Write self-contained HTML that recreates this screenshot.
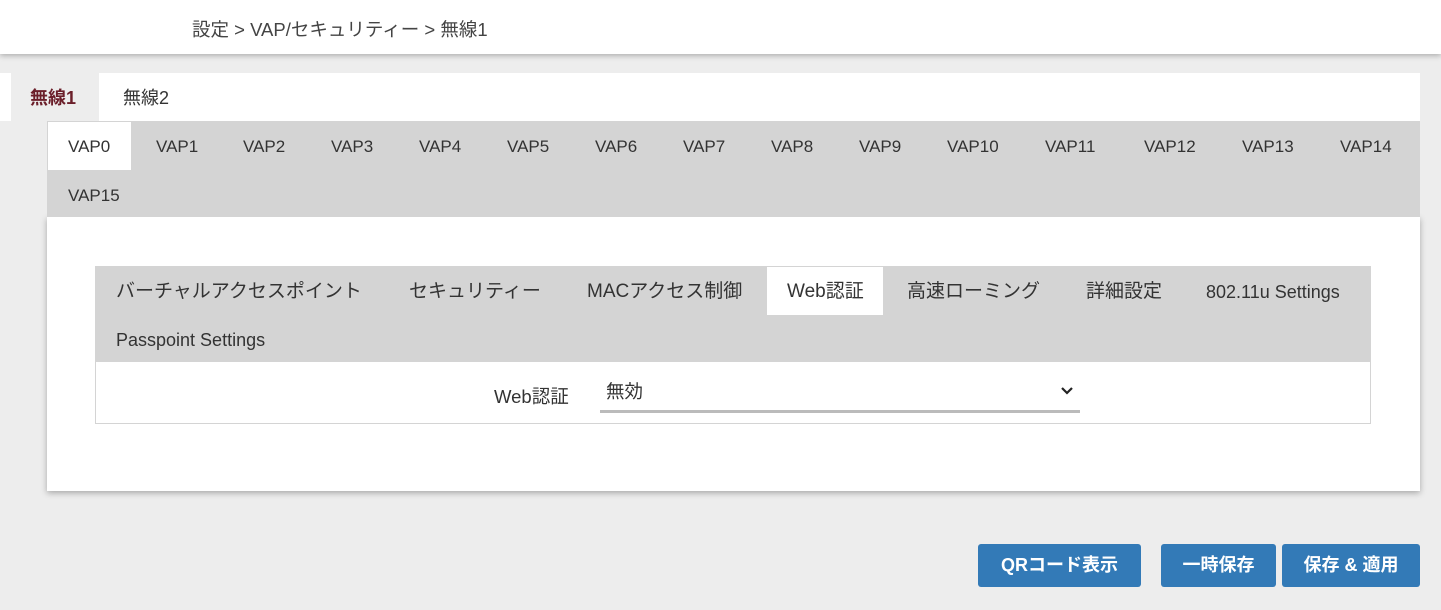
<!DOCTYPE html>
<html><head><meta charset="utf-8"><style>
*{margin:0;padding:0;box-sizing:border-box}
body{width:1441px;height:610px;background:#ededed;font-family:"Liberation Sans","Noto Sans CJK JP",sans-serif;color:#333;position:relative;overflow:hidden}
.a{position:absolute;white-space:nowrap}
#hdr{left:0;top:0;width:1441px;height:54px;background:#fff;box-shadow:0 2px 5px rgba(0,0,0,.25)}
.t{font-size:17px;line-height:50px}
.s{font-size:19px;line-height:50px}
.btn{background:#337ab7;color:#fff;font-weight:bold;font-size:18px;height:43px;line-height:43px;text-align:center;border-radius:3px;top:544px}
</style></head><body>
<div class="a" id="hdr"></div>
<div class="a" style="left:192px;top:16px;font-size:18.5px;color:#444">設定 &gt; VAP/セキュリティー &gt; 無線1</div>
<div class="a" style="left:0;top:73px;width:1420px;height:48px;background:#fff"></div>
<div class="a" style="left:11px;top:73px;width:88px;height:48px;background:#ededed"></div>
<div class="a t" style="left:30px;top:73px;font-weight:bold;color:#6b1f2a;font-size:18px">無線1</div>
<div class="a t" style="left:123px;top:73px;font-size:18px">無線2</div>
<div class="a" style="left:47px;top:217px;width:1373px;height:274px;background:#fff;box-shadow:0 2px 6px rgba(0,0,0,.3)"></div>
<div class="a" style="left:47px;top:121px;width:1373px;height:96px;background:#d4d4d4"></div>
<div class="a" style="left:48px;top:122px;width:83px;height:48px;background:#fff"></div>
<div class="a t" style="left:68px;top:122px">VAP0</div>
<div class="a t" style="left:156px;top:122px">VAP1</div>
<div class="a t" style="left:243px;top:122px">VAP2</div>
<div class="a t" style="left:331px;top:122px">VAP3</div>
<div class="a t" style="left:419px;top:122px">VAP4</div>
<div class="a t" style="left:507px;top:122px">VAP5</div>
<div class="a t" style="left:595px;top:122px">VAP6</div>
<div class="a t" style="left:683px;top:122px">VAP7</div>
<div class="a t" style="left:771px;top:122px">VAP8</div>
<div class="a t" style="left:859px;top:122px">VAP9</div>
<div class="a t" style="left:947px;top:122px">VAP10</div>
<div class="a t" style="left:1045px;top:122px">VAP11</div>
<div class="a t" style="left:1144px;top:122px">VAP12</div>
<div class="a t" style="left:1242px;top:122px">VAP13</div>
<div class="a t" style="left:1340px;top:122px">VAP14</div>
<div class="a t" style="left:68px;top:171px">VAP15</div>
<div class="a" style="left:95px;top:266px;width:1276px;height:96px;background:#d4d4d4"></div>
<div class="a" style="left:767px;top:267px;width:116px;height:48px;background:#fff"></div>
<div class="a s" style="left:116px;top:267px">バーチャルアクセスポイント</div>
<div class="a s" style="left:409px;top:267px">セキュリティー</div>
<div class="a s" style="left:587px;top:267px">MACアクセス制御</div>
<div class="a s" style="left:787px;top:267px">Web認証</div>
<div class="a s" style="left:907px;top:267px">高速ローミング</div>
<div class="a s" style="left:1086px;top:267px">詳細設定</div>
<div class="a s" style="left:1206px;top:267px;font-size:18px">802.11u Settings</div>
<div class="a s" style="left:116px;top:315px;font-size:18px">Passpoint Settings</div>
<div class="a" style="left:95px;top:362px;width:1276px;height:62px;border:1px solid #d4d4d4;border-top:none;background:#fff"></div>
<div class="a" style="left:494px;top:383px;font-size:18.5px">Web認証</div>
<div class="a" style="left:606px;top:378px;font-size:18.5px">無効</div>
<div class="a" style="left:600px;top:410px;width:480px;height:3px;background:#bbb"></div>
<svg class="a" style="left:1060px;top:386px" width="14" height="10"><path d="M2 2 L7 7 L12 2" stroke="#222" stroke-width="2.2" fill="none"/></svg>
<div class="a btn" style="left:978px;width:163px">QRコード表示</div>
<div class="a btn" style="left:1161px;width:115px">一時保存</div>
<div class="a btn" style="left:1282px;width:138px">保存 &amp; 適用</div>
</body></html>
